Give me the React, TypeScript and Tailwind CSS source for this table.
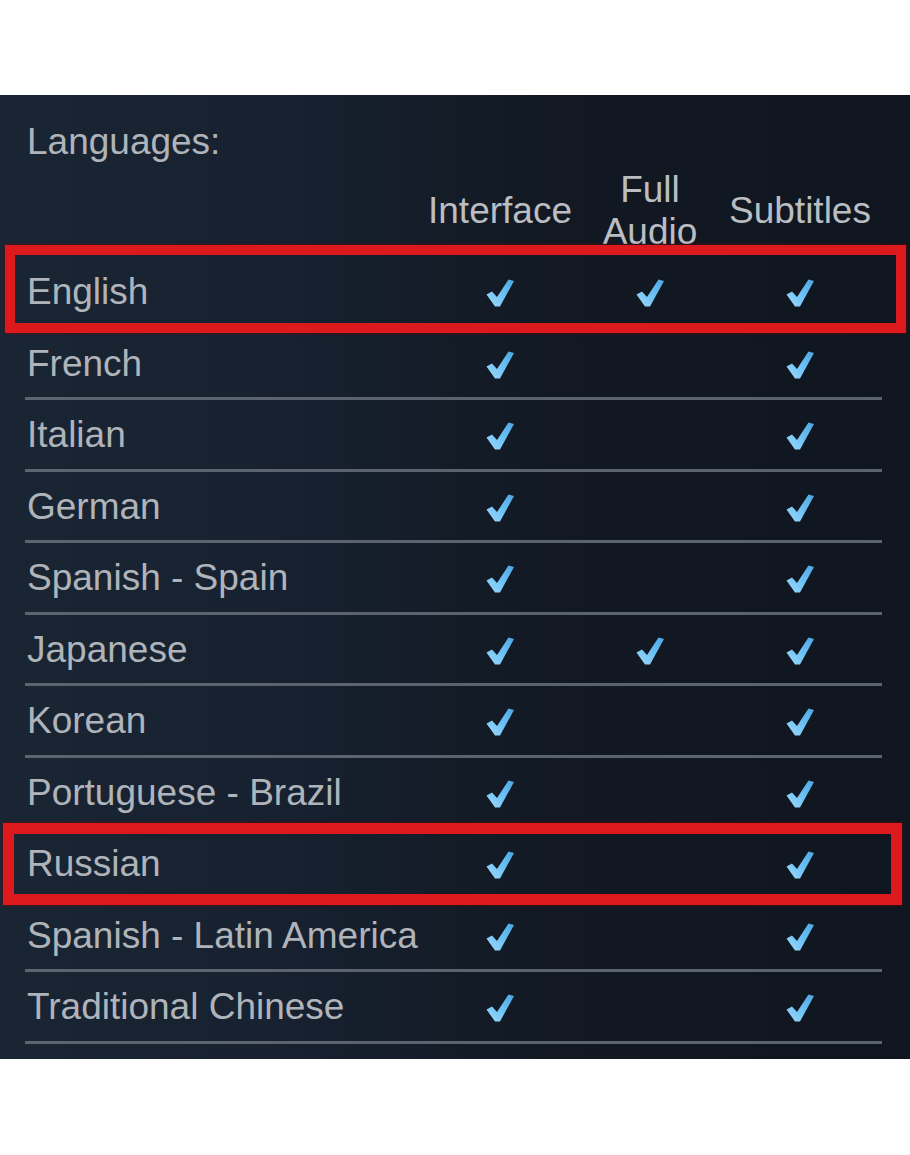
import React from "react";

type Row = { name: string; ui: boolean; audio: boolean; subs: boolean };

const rows: Row[] = [
  { name: "English", ui: true, audio: true, subs: true },
  { name: "French", ui: true, audio: false, subs: true },
  { name: "Italian", ui: true, audio: false, subs: true },
  { name: "German", ui: true, audio: false, subs: true },
  { name: "Spanish - Spain", ui: true, audio: false, subs: true },
  { name: "Japanese", ui: true, audio: true, subs: true },
  { name: "Korean", ui: true, audio: false, subs: true },
  { name: "Portuguese - Brazil", ui: true, audio: false, subs: true },
  { name: "Russian", ui: true, audio: false, subs: true },
  { name: "Spanish - Latin America", ui: true, audio: false, subs: true },
  { name: "Traditional Chinese", ui: true, audio: false, subs: true },
];

function Check() {
  return (
    <svg width="30" height="30" viewBox="0 0 30 30" className="mt-1">
      <defs>
        <linearGradient id="chk" x1="0" y1="1" x2="1" y2="0">
          <stop offset="0" stopColor="#a2d9fb" />
          <stop offset="0.5" stopColor="#6cc2f5" />
          <stop offset="1" stopColor="#4ea6e0" />
        </linearGradient>
      </defs>
      <path
        d="M1.5 16.5 L7 13.5 L12 19 L23.5 1.5 L29 3 L15 28.5 L10 28.5 Z"
        fill="url(#chk)"
      />
    </svg>
  );
}

function Cell({ on }: { on: boolean }) {
  return (
    <div className="w-[150px] flex items-center justify-center">
      {on ? <Check /> : null}
    </div>
  );
}

export default function App() {
  return (
    <div
      className="relative w-[910px] h-[1155px] bg-white pt-[95px]"
      style={{ fontFamily: '"Liberation Sans", Arial, sans-serif' }}
    >
      <div className="h-[964px] bg-[linear-gradient(90deg,#1a2534_0%,#172130_30%,#121923_60%,#10161f_100%)] pl-[25px] pt-[26px] text-[37px] leading-[42px] text-[#afb4ba]">
        <div className="h-[42px] pl-[2px]">Languages:</div>
        <div className="mt-[6px] flex h-[84px] w-[857px] items-center text-[#babec3]">
          <div className="w-[400px]" />
          <div className="w-[150px] text-center">Interface</div>
          <div className="w-[150px] text-center">
            Full
            <br />
            Audio
          </div>
          <div className="w-[150px] text-center">Subtitles</div>
        </div>
        <div className="mt-[4px] w-[857px]">
          {rows.map((r) => (
            <div
              key={r.name}
              className="flex h-[71.5px] items-center border-b-[3px] border-[#5b636e]"
            >
              <div className="w-[400px] pl-[2px] pt-[2px]">{r.name}</div>
              <Cell on={r.ui} />
              <Cell on={r.audio} />
              <Cell on={r.subs} />
            </div>
          ))}
        </div>
      </div>

      <div className="pointer-events-none absolute left-[5px] top-[245px] h-[88px] w-[901px] border-[10px] border-[#dc1a1d] shadow-[0_0_3px_#6b0a0c]" />
      <div className="pointer-events-none absolute left-[3px] top-[823px] h-[82px] w-[899px] border-[11px] border-[#dc1a1d] shadow-[0_0_3px_#6b0a0c]" />
    </div>
  );
}
